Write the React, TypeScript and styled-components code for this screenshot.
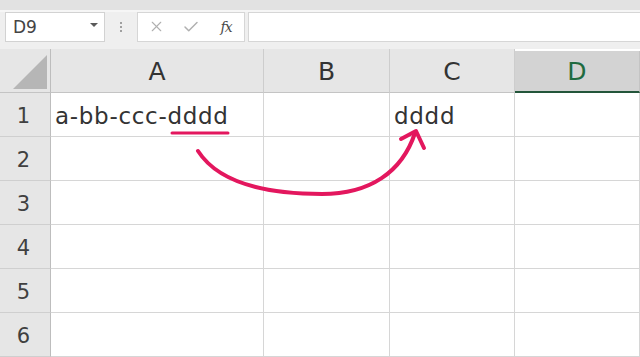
import styled, { createGlobalStyle } from "styled-components";
import { X, Check } from "lucide-react";

const GlobalStyle = createGlobalStyle`
  html, body {
    margin: 0;
    padding: 0;
    background: #ffffff;
  }
  body {
    font-family: "DejaVu Sans", "Noto Sans", sans-serif;
    overflow: hidden;
  }
`;

const Window = styled.div`
  position: relative;
  width: 640px;
  height: 357px;
  overflow: hidden;
  display: flex;
  flex-direction: column;
  background: #efefef;
`;

const TopBand = styled.div`
  height: 10px;
  background: #e2e2e2;
  border-bottom: 2px solid #f6f6f6;
`;

const Toolbar = styled.div`
  height: 38px;
  display: flex;
  align-items: flex-start;
  background: #efefef;
`;

const NameBox = styled.div`
  margin-left: 5px;
  width: 100px;
  height: 30px;
  box-sizing: border-box;
  border: 1px solid #d2d2d2;
  background: #ffffff;
  display: flex;
  align-items: center;
  justify-content: space-between;
  padding: 0 6px 0 7px;
  font-family: "DejaVu Sans", sans-serif;
  font-size: 17px;
  color: #444444;
`;

const Caret = styled.span`
  width: 0;
  height: 0;
  border-left: 4px solid transparent;
  border-right: 4px solid transparent;
  border-top: 4px solid #5a5a5a;
  margin-top: -3px;
`;

const Grip = styled.div`
  width: 32px;
  height: 30px;
  display: flex;
  flex-direction: column;
  align-items: center;
  justify-content: center;
  gap: 2px;
`;

const GripDot = styled.span`
  width: 2px;
  height: 2px;
  background: #a0a0a0;
`;

const FxButtons = styled.div`
  width: 108px;
  height: 30px;
  box-sizing: border-box;
  border: 1px solid #d6d6d6;
  background: #ffffff;
  display: grid;
  grid-template-columns: 36px 34px 1fr;
  align-items: center;
  justify-items: center;
  color: #b0b0b0;
`;

const Fx = styled.span`
  font-family: "DejaVu Serif", "Liberation Serif", serif;
  font-style: italic;
  font-size: 14px;
  color: #4a4a4a;
  letter-spacing: -1px;
`;

const FormulaInput = styled.div`
  flex: 1;
  margin-left: 3px;
  height: 30px;
  box-sizing: border-box;
  border: 1px solid #d6d6d6;
  border-right: none;
  background: #ffffff;
`;

const Sheet = styled.div`
  display: grid;
  grid-template-columns: 51px 213px 126px 125px 1fr;
  grid-template-rows: repeat(7, 44px);
  background: #ffffff;
`;

const Corner = styled.div`
  background: #e6e6e6;
  border-right: 1px solid #bdbdbd;
  border-bottom: 1px solid #c4c4c4;
  position: relative;
  &::after {
    content: "";
    position: absolute;
    left: 13px;
    bottom: 3px;
    width: 34px;
    height: 34px;
    background: #b6b6b6;
    clip-path: polygon(0 100%, 100% 0, 100% 100%);
  }
`;

const ColHeader = styled.div<{ $selected?: boolean }>`
  box-sizing: border-box;
  display: flex;
  align-items: center;
  justify-content: center;
  font-family: "DejaVu Sans", sans-serif;
  font-size: 25px;
  color: ${(p) => (p.$selected ? "#1f6b40" : "#333333")};
  background: ${(p) => (p.$selected ? "#d3d3d3" : "#e6e6e6")};
  border-right: 1px solid ${(p) => (p.$selected ? "#c4c4c4" : "#cdcdcd")};
  border-bottom: ${(p) => (p.$selected ? "2px solid #23553a" : "1px solid #c4c4c4")};
  margin-top: ${(p) => (p.$selected ? "2px" : "0")};
  padding-top: 1px;
`;

const RowHeader = styled.div`
  display: flex;
  align-items: center;
  justify-content: center;
  font-family: "DejaVu Sans", sans-serif;
  font-size: 21px;
  color: #404040;
  background: #e6e6e6;
  border-right: 1px solid #bdbdbd;
  border-bottom: 1px solid #cfcfcf;
  padding-right: 3px;
  padding-top: 2px;
`;

const Cell = styled.div`
  display: flex;
  align-items: center;
  padding: 2px 0 0 4px;
  font-family: "DejaVu Sans", sans-serif;
  font-size: 23px;
  letter-spacing: 0.7px;
  color: #333333;
  white-space: nowrap;
  border-right: 1px solid #d6d6d6;
  border-bottom: 1px solid #d6d6d6;
`;

const Annotation = styled.svg`
  position: absolute;
  left: 0;
  top: 0;
  pointer-events: none;
`;

const columns = ["A", "B", "C", "D"];
const rows: string[][] = [
  ["a-bb-ccc-dddd", "", "dddd", ""],
  ["", "", "", ""],
  ["", "", "", ""],
  ["", "", "", ""],
  ["", "", "", ""],
  ["", "", "", ""],
];

const App = () => {
  return (
    <>
      <GlobalStyle />
      <Window>
        <TopBand />
        <Toolbar>
          <NameBox>
            <span>D9</span>
            <Caret />
          </NameBox>
          <Grip>
            <GripDot />
            <GripDot />
            <GripDot />
          </Grip>
          <FxButtons>
            <X size={17} strokeWidth={1.6} />
            <Check size={18} strokeWidth={2} />
            <Fx>fx</Fx>
          </FxButtons>
          <FormulaInput />
        </Toolbar>
        <Sheet>
          <Corner />
          {columns.map((c) => (
            <ColHeader key={c} $selected={c === "D"}>
              {c}
            </ColHeader>
          ))}
          {rows.map((row, i) => [
            <RowHeader key={`h${i}`}>{i + 1}</RowHeader>,
            ...row.map((text, j) => <Cell key={`${i}-${j}`}>{text}</Cell>),
          ])}
        </Sheet>
        <Annotation width="640" height="357" viewBox="0 0 640 357">
          <g
            fill="none"
            stroke="#e3175e"
            strokeLinecap="round"
            strokeLinejoin="round"
          >
            <path d="M172 133 L228 133" strokeWidth="3" />
            <path
              d="M198 151 C 218 182, 262 194, 322 194 C 370 194, 402 172, 415 133"
              strokeWidth="4"
            />
            <path d="M401 139 L416 131 L424 148" strokeWidth="4" />
          </g>
        </Annotation>
      </Window>
    </>
  );
};

export default App;
